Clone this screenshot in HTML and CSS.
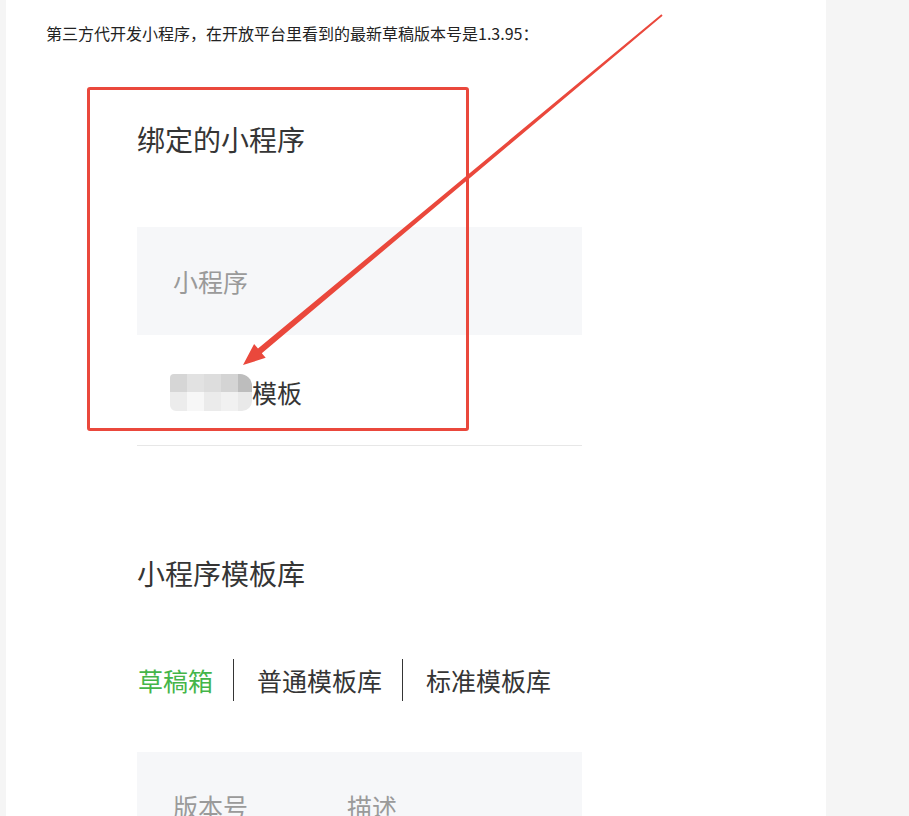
FILE: index.html
```html
<!DOCTYPE html>
<html lang="zh-CN">
<head>
  <meta charset="UTF-8">
  <title>小程序草稿版本</title>
  <link rel="stylesheet" href="styles.css">
</head>
<body>

<div class="page">
  <p class="intro">第三方代开发小程序，在开放平台里看到的最新草稿版本号是1.3.95：</p>

  <div class="shot">
    <h2>绑定的小程序</h2>
    <table class="list">
      <thead>
        <tr><th>小程序</th></tr>
      </thead>
      <tbody>
        <tr>
          <td>
            <div class="name">
              <span class="mosaic">
                <i class="m1"></i><i class="m2"></i><i class="m3"></i><i class="m4"></i><i class="m5"></i>
                <i class="m6"></i><i class="m7"></i><i class="m8"></i><i class="m9"></i><i class="m10"></i>
              </span>
              <span>模板</span>
            </div>
          </td>
        </tr>
      </tbody>
    </table>

    <h2 class="lib-title">小程序模板库</h2>
    <div class="tabs">
      <span class="tab active">草稿箱</span>
      <span class="tab">普通模板库</span>
      <span class="tab">标准模板库</span>
    </div>

    <table class="list versions">
      <thead>
        <tr><th class="col-ver">版本号</th><th class="col-desc">描述</th></tr>
      </thead>
    </table>
  </div>

  <!-- annotation drawn over the screenshot -->
  <div class="mark-box"></div>
  <svg class="mark-arrow" width="820" height="816" viewBox="0 0 820 816">
    <polygon fill="#ea483c" points="656.6,15.8 655.4,14.2 252.0,348.6 248.1,344.0 237,365 259.7,357.8 255.8,353.2"/>
  </svg>
</div>

</body>
</html>
```

FILE: styles.css
```css
body {
  margin: 0;
  background: #f5f5f5;
  font-family: "Noto Sans CJK SC", "Noto Sans", sans-serif;
  color: #353535;
}

.page {
  position: relative;
  width: 820px;
  min-height: 816px;
  margin-left: 6px;
  background: #fff;
  overflow: hidden;
}

.intro {
  margin: 0;
  padding: 21px 0 0 40px;
  font-size: 16px;
  line-height: 24px;
  color: #222;
}

.shot {
  padding-left: 131px;
}

h2 {
  margin: 74px 0 0;
  font-size: 28px;
  font-weight: normal;
  line-height: 40px;
  color: #353535;
}

.list {
  width: 445px;
  margin-top: 68px;
  border-collapse: collapse;
  font-size: 25px;
}

.list th {
  height: 108px;
  padding: 0 0 0 36px;
  background: #f6f7f9;
  color: #9a9a9a;
  font-weight: normal;
  text-align: left;
}

.list td {
  height: 110px;
  padding: 0 0 0 33px;
  border-bottom: 1px solid #e7e7e7;
  color: #353535;
}

.name {
  display: flex;
  align-items: center;
  padding-top: 4px;
  line-height: 36px;
  white-space: nowrap;
}

.mosaic {
  display: grid;
  grid-template-columns: repeat(5, 17px);
  grid-template-rows: 18px 19px;
  width: 82px;
  filter: blur(0.6px);
  overflow: hidden;
  border-radius: 4px 12px 10px 6px;
}

.mosaic i { display: block; }
.m1 { background: #d6d6d6; }
.m2 { background: #e2e2e2; }
.m3 { background: #dddddd; }
.m4 { background: #d4d4d4; }
.m5 { background: #bdbdbd; }
.m6 { background: #ececec; }
.m7 { background: #f7f7f7; }
.m8 { background: #ebebeb; }
.m9 { background: #f1f1f1; }
.m10 { background: #e9e9e9; }

.lib-title {
  margin-top: 107px;
}

.tabs {
  display: flex;
  margin-top: 66px;
  font-size: 25px;
  line-height: 42px;
}

.tab {
  padding: 0 20px 0 23px;
  border-left: 1px solid #353535;
  color: #353535;
}

.tab:first-child {
  padding-left: 1px;
  border-left: none;
}

.tab.active {
  color: #44b549;
}

.versions {
  margin-top: 51px;
}

.versions .col-ver {
  width: 138px;
}

.mark-box {
  position: absolute;
  left: 81px;
  top: 87px;
  width: 376px;
  height: 338px;
  border: 3px solid #ea483c;
  border-radius: 3px;
}

.mark-arrow {
  position: absolute;
  left: 0;
  top: 0;
}
```
